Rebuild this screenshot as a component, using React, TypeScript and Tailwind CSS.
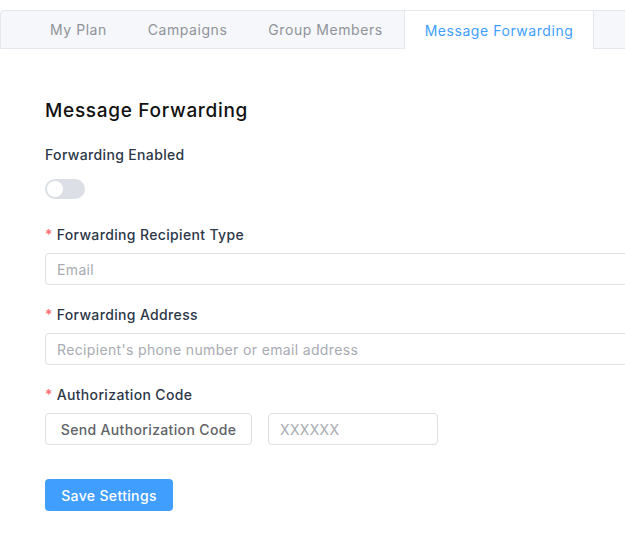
import React, { useState } from 'react';

const tabs = ['My Plan', 'Campaigns', 'Group Members', 'Message Forwarding'];

function Label({ text }: { text: string }) {
  return (
    <div className="flex items-center h-[22px] text-[14px] font-medium text-[#2d3748]">
      <span className="text-[#f56c6c] mr-[4px]">*</span>
      {text}
    </div>
  );
}

export default function App() {
  const [enabled, setEnabled] = useState(false);
  const active = 3;

  return (
    <div
      className="w-[625px] h-[542px] overflow-hidden bg-white pt-[10px] tracking-[0.35px]"
      style={{ fontFamily: 'Inter, "Noto Sans", sans-serif' }}
    >
      {/* Tabs header */}
      <div className="w-[700px] h-[39px] flex bg-[#f5f7fa] border border-[#e4e7ed] rounded-tl-[4px] pl-[29px] tracking-[0.55px]">
        {tabs.map((t, i) => (
          <div
            key={t}
            className={
              i === active
                ? 'h-[39px] -mt-px px-[20px] flex items-center bg-white border-x border-t border-[#e4e7ed] text-[14px] text-[#409eff]'
                : 'h-full px-[20px] mr-px flex items-center text-[14px] text-[#909399]'
            }
          >
            {t}
          </div>
        ))}
      </div>

      {/* Body */}
      <div className="px-[45px] pt-[48px]">
        <div className="text-[19px] leading-[28px] font-medium text-[#111] tracking-[0.7px]">Message Forwarding</div>

        <div className="mt-[18px] h-[22px] flex items-center text-[14px] font-medium text-[#2d3748]">Forwarding Enabled</div>
        <button
          onClick={() => setEnabled(!enabled)}
          className={`mt-[14px] block w-[40px] h-[20px] rounded-full relative ${enabled ? 'bg-[#409eff]' : 'bg-[#dcdfe6]'}`}
        >
          <span className={`absolute top-[2px] w-[16px] h-[16px] rounded-full bg-white ${enabled ? 'left-[22px]' : 'left-[2px]'}`} />
        </button>

        <div className="mt-[24px]">
          <Label text="Forwarding Recipient Type" />
        </div>
        <div className="mt-[8px] w-[620px] h-[32px] border border-[#dcdfe6] rounded-[4px] flex items-center px-[11px] text-[14px] text-[#a8abb2]">
          Email
        </div>

        <div className="mt-[18px]">
          <Label text="Forwarding Address" />
        </div>
        <input
          placeholder="Recipient's phone number or email address"
          className="mt-[8px] block w-[620px] h-[32px] border border-[#dcdfe6] rounded-[4px] px-[11px] text-[14px] text-[#606266] placeholder:text-[#a8abb2] outline-none"
        />

        <div className="mt-[18px]">
          <Label text="Authorization Code" />
        </div>
        <div className="mt-[8px] flex gap-[16px]">
          <button className="w-[207px] h-[32px] border border-[#dcdfe6] rounded-[4px] text-[14px] font-medium text-[#606266] bg-white">
            Send Authorization Code
          </button>
          <input
            placeholder="XXXXXX"
            className="w-[170px] h-[32px] border border-[#dcdfe6] rounded-[4px] px-[11px] text-[14px] text-[#606266] placeholder:text-[#a8abb2] outline-none"
          />
        </div>

        <button className="mt-[34px] w-[128px] h-[32px] rounded-[4px] bg-[#409eff] text-white text-[14px] font-medium">
          Save Settings
        </button>
      </div>
    </div>
  );
}
